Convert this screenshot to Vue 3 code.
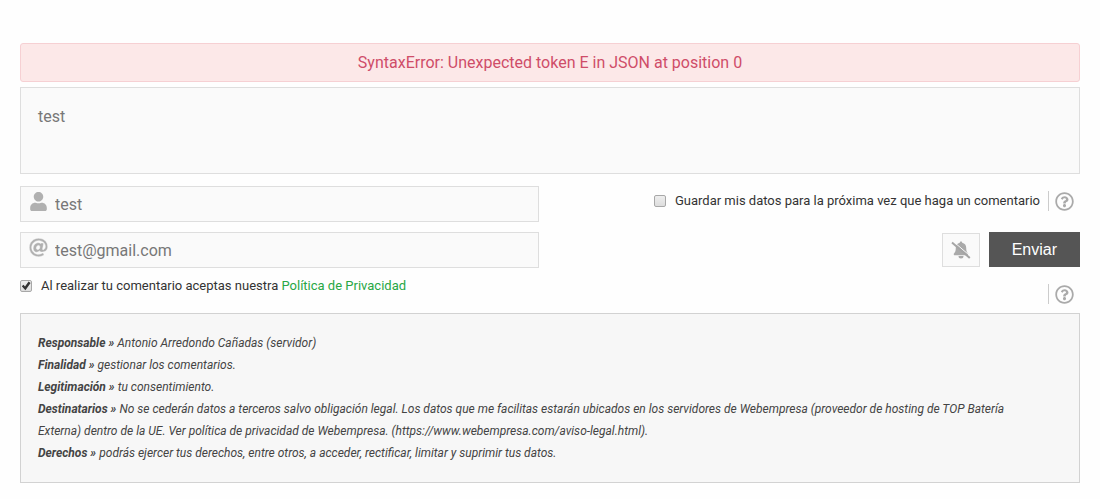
<template>
  <form class="comment-form" @submit.prevent>
    <div class="error-message" role="alert">{{ errorMessage }}</div>

    <textarea v-model="comment" class="field comment-text" aria-label="Comentario"></textarea>

    <div class="form-columns">
      <div class="user-fields">
        <div class="field input-group">
          <svg class="input-icon" viewBox="0 0 448 512" aria-hidden="true">
            <path d="M224 256c70.7 0 128-57.3 128-128S294.7 0 224 0 96 57.3 96 128s57.3 128 128 128zm89.6 32h-16.7c-22.2 10.2-46.9 16-72.9 16s-50.6-5.8-72.9-16h-16.7C60.2 288 0 348.2 0 422.4V464c0 26.5 21.5 48 48 48h352c26.5 0 48-21.5 48-48v-41.6c0-74.2-60.2-134.4-134.4-134.4z" />
          </svg>
          <input v-model="name" type="text" aria-label="Nombre" />
        </div>
        <div class="field input-group">
          <svg class="input-icon at-icon" viewBox="0 0 512 512" aria-hidden="true">
            <path d="M256 8C118.941 8 8 118.919 8 256c0 137.059 110.919 248 248 248 48.154 0 95.342-14.14 135.408-40.223 12.005-7.815 14.625-24.288 5.552-35.372l-10.177-12.433c-7.671-9.371-21.179-11.667-31.373-5.129C325.92 429.757 291.314 440 256 440c-101.458 0-184-82.542-184-184S154.542 72 256 72c100.139 0 184 57.619 184 160 0 38.786-21.093 79.742-58.17 83.693-17.349-.454-16.91-12.857-13.476-30.024l23.433-121.11C394.653 149.75 383.308 136 368.225 136h-44.981a13.518 13.518 0 0 0-13.432 11.993l-.01.092c-14.697-17.901-40.448-21.775-59.971-21.775-74.58 0-137.831 62.234-137.831 151.46 0 65.303 36.785 105.87 96 105.87 26.984 0 57.369-15.637 74.991-38.333 9.522 34.104 40.613 34.103 70.71 34.103C462.609 379.41 504 307.798 504 232 504 95.653 394.023 8 256 8zm-21.68 304.43c-22.249 0-36.07-15.623-36.07-40.771 0-44.993 30.779-72.729 58.63-72.729 22.292 0 35.601 15.241 35.601 40.77 0 45.061-33.875 72.73-58.161 72.73z" />
          </svg>
          <input v-model="email" type="email" aria-label="Email" />
        </div>
      </div>

      <div class="actions">
        <div class="save-row">
          <label class="check-label">
            <input v-model="saveData" type="checkbox" class="check" />
            <span>Guardar mis datos para la próxima vez que haga un comentario</span>
          </label>
          <button type="button" class="help-btn" aria-label="Ayuda">
            <svg viewBox="0 0 512 512" aria-hidden="true"><path :d="helpIcon" /></svg>
          </button>
        </div>
        <div class="submit-row">
          <button type="button" class="notify-btn" aria-label="Notificaciones" @click="notify = !notify">
            <svg viewBox="0 0 20 18" aria-hidden="true">
              <path d="M10 0.5c.8 0 1.2.5 1.2 1.2C13.900 2.200 15.200 4.200 15.200 6.800c0 3.400.7 4.600 1.800 5.700.6.7.2 1.700-.7 1.700H3.700c-.9 0-1.300-1-.7-1.700 1.100-1.100 1.800-2.300 1.800-5.700 0-2.600 1.300-4.600 4-5.100C8.800 1 9.200.5 10 .5zM7.500 15h5a2.500 2.500 0 0 1-5 0z" />
              <path class="slash-gap" d="M2.200 0.400 20 15.700" />
              <path class="slash" d="M1 1.600 18.800 16.900" />
            </svg>
          </button>
          <button type="submit" class="submit-btn">Enviar</button>
        </div>
      </div>
    </div>

    <div class="policy-row">
      <div class="check-label">
        <input id="policy" v-model="acceptPolicy" type="checkbox" class="check" />
        <label for="policy">Al realizar tu comentario aceptas nuestra <a href="#">Política de Privacidad</a></label>
      </div>
      <button type="button" class="help-btn" aria-label="Ayuda">
        <svg viewBox="0 0 512 512" aria-hidden="true"><path :d="helpIcon" /></svg>
      </button>
    </div>

    <div class="legal-box">
      <p v-for="item in legal" :key="item.title">
        <strong>{{ item.title }} »</strong> {{ item.text }}
      </p>
    </div>
  </form>
</template>

<script setup>
import { ref } from 'vue'

const errorMessage = ref('SyntaxError: Unexpected token E in JSON at position 0')
const comment = ref('test')
const name = ref('test')
const email = ref('test@gmail.com')
const saveData = ref(false)
const acceptPolicy = ref(true)
const notify = ref(false)

const helpIcon = 'M256 8C119.043 8 8 119.083 8 256c0 136.997 111.043 248 248 248s248-111.003 248-248C504 119.083 392.957 8 256 8zm0 448c-110.532 0-200-89.431-200-200 0-110.495 89.472-200 200-200 110.491 0 200 89.471 200 200 0 110.53-89.431 200-200 200zm107.244-255.2c0 67.052-72.421 68.084-72.421 92.863V300c0 6.627-5.373 12-12 12h-45.647c-6.627 0-12-5.373-12-12v-8.659c0-35.745 27.1-50.034 47.579-61.516 17.561-9.845 28.324-16.541 28.324-29.579 0-17.246-21.999-28.693-39.784-28.693-23.189 0-33.894 10.977-48.942 29.969-4.057 5.12-11.46 6.071-16.666 2.124l-27.824-21.098c-5.107-3.872-6.251-11.066-2.644-16.363C184.846 131.491 214.94 112 261.794 112c49.071 0 101.45 38.304 101.45 88.8zM298 368c0 23.159-18.841 42-42 42s-42-18.841-42-42 18.841-42 42-42 42 18.841 42 42z'

const legal = [
  { title: 'Responsable', text: 'Antonio Arredondo Cañadas (servidor)' },
  { title: 'Finalidad', text: 'gestionar los comentarios.' },
  { title: 'Legitimación', text: 'tu consentimiento.' },
  {
    title: 'Destinatarios',
    text: 'No se cederán datos a terceros salvo obligación legal. Los datos que me facilitas estarán ubicados en los servidores de Webempresa (proveedor de hosting de TOP Batería Externa) dentro de la UE. Ver política de privacidad de Webempresa. (https://www.webempresa.com/aviso-legal.html).'
  },
  { title: 'Derechos', text: 'podrás ejercer tus derechos, entre otros, a acceder, rectificar, limitar y suprimir tus datos.' }
]
</script>

<style>
body {
  margin: 0;
  background: #fefefe;
}
</style>

<style scoped>
.comment-form {
  padding: 43px 20px 16px;
  font-family: Roboto, sans-serif;
  font-size: 13px;
  line-height: 20px;
  color: #333;
}

.comment-form *,
.comment-form *::before {
  box-sizing: border-box;
}

.error-message {
  padding: 8px 16px;
  border: 1px solid #f6d0d3;
  border-radius: 3px;
  background: #fce8e8;
  color: #cf4d68;
  font-size: 16px;
  line-height: 21px;
  text-align: center;
}

.field {
  border: 1px solid #dedede;
  background: #fafafa;
}

.comment-text,
.input-group input {
  color: #777;
  font-family: inherit;
  font-size: 16px;
  outline: none;
}

.comment-text {
  display: block;
  width: 100%;
  height: 87px;
  margin-top: 5px;
  padding: 19px 17px;
  line-height: 20px;
  resize: none;
}

.form-columns {
  display: flex;
  justify-content: space-between;
  margin-top: 12px;
}

.user-fields {
  display: flex;
  flex-direction: column;
  gap: 10px;
  width: 49%;
}

.input-group {
  display: flex;
  align-items: center;
  height: 36px;
}

.input-icon {
  width: 19px;
  height: 19px;
  margin: 0 7px 6px 8px;
  fill: #b0b0b0;
}

.at-icon {
  stroke: #fafafa;
  stroke-width: 12;
}

.input-group input {
  flex: 1;
  min-width: 0;
  height: 100%;
  padding: 0;
  border: none;
  background: none;
}

.actions {
  display: flex;
  flex-direction: column;
  justify-content: space-between;
}

.save-row,
.submit-row {
  display: flex;
  justify-content: flex-end;
}

.save-row {
  align-items: center;
  padding: 5px 6px 0 0;
  gap: 8px;
}

.submit-row {
  align-items: flex-end;
  padding-bottom: 1px;
  gap: 9px;
}

.check-label {
  display: flex;
  align-items: center;
  gap: 9px;
}

.check {
  appearance: none;
  width: 12px;
  height: 12px;
  margin: 0;
  border: 1px solid #a8a8a8;
  border-radius: 2px;
  background: linear-gradient(#eee, #ddd);
}

.check:checked::before {
  content: '';
  display: block;
  width: 10px;
  height: 10px;
  background: #333;
  clip-path: polygon(8% 52%, 25% 38%, 40% 56%, 76% 6%, 96% 20%, 44% 92%);
}

.help-btn {
  display: flex;
  align-items: center;
  height: 20px;
  padding: 0 0 0 6px;
  border: none;
  border-left: 1px solid #ccc;
  background: none;
  cursor: pointer;
}

.help-btn svg {
  width: 19px;
  height: 19px;
  fill: #aaa;
}

.notify-btn {
  display: flex;
  align-items: center;
  justify-content: center;
  width: 38px;
  height: 34px;
  padding: 0;
  border: 1px solid #dedede;
  background: #fafafa;
  cursor: pointer;
}

.notify-btn svg {
  width: 20px;
  height: 18px;
  fill: #aaa;
}

.slash {
  stroke: #a5a5a5;
  stroke-width: 2;
}

.slash-gap {
  stroke: #fafafa;
  stroke-width: 1;
}

.submit-btn {
  height: 35px;
  padding: 0 23px;
  border: none;
  background: #555;
  color: #fff;
  font-family: "Liberation Sans", Arial, sans-serif;
  font-size: 16px;
  cursor: pointer;
}

.policy-row {
  display: flex;
  justify-content: space-between;
  align-items: flex-end;
  padding: 8px 6px 9px 0;
}

.policy-row .check-label {
  margin-bottom: 8px;
}

.policy-row a {
  color: #28a745;
  text-decoration: none;
}

.legal-box {
  padding: 18px 40px 18px 17px;
  border: 1px solid #d2d2d2;
  background: #f7f7f7;
  color: #444;
  font-size: 12px;
  font-style: italic;
  line-height: 22px;
}

.legal-box p {
  margin: 0;
}
</style>
